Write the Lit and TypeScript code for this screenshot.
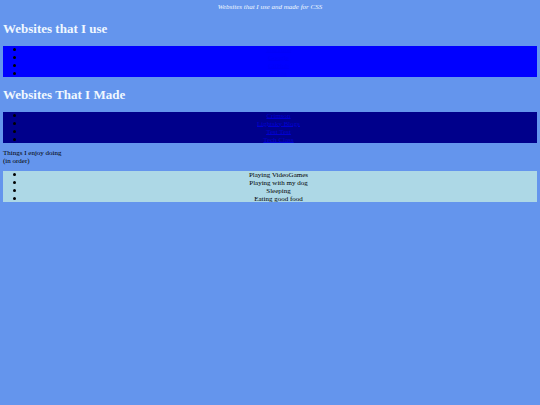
import { LitElement, html, css } from "lit";
import { customElement } from "lit/decorators.js";

const used = ["YouTube", "Google", "GitHub", "Replit"];
const made = ["Crimson", "Lightsky Blogs", "Test Test", "Tech Class"];
const hobbies = ["Playing VideoGames", "Playing with my dog", "Sleeping", "Eating good food"];

@customElement("app-root")
export class AppRoot extends LitElement {
  static styles = css`
    :host {
      display: block;
      box-sizing: border-box;
      min-height: 100vh;
      padding: 3px;
      background: cornflowerblue;
      color: black;
      font: 7px/8px "Liberation Serif", serif;
    }
    .intro {
      margin: 0;
      text-align: center;
      font-style: italic;
      color: aliceblue;
    }
    h1 {
      margin: 10px 0;
      font-size: 13px;
      line-height: 15px;
      color: aliceblue;
    }
    .list {
      display: grid;
      grid-auto-rows: 7px;
      row-gap: 1px;
      margin: 0;
      padding: 0 5px 0 22px;
      overflow: hidden;
      line-height: 7px;
      text-align: center;
    }
    li::marker { font-size: 9px; }
    .used { background: blue; }
    .made { background: darkblue; }
    .hobbies { background: lightblue; }
    a { text-underline-offset: 0; }
    .used a { color: #0000fa; }
    .made a { color: #0000d0; }
    .note { margin: 6px 0; }
  `;

  private links(names: string[], kind: string) {
    return html`<ul class="list ${kind}">
      ${names.map((n) => html`<li><a href="#">${n}</a></li>`)}
    </ul>`;
  }

  render() {
    return html`
      <p class="intro">Websites that I use and made for CSS</p>
      <h1>Websites that I use</h1>
      ${this.links(used, "used")}
      <h1>Websites That I Made</h1>
      ${this.links(made, "made")}
      <p class="note">Things I enjoy doing<br />(in order)</p>
      <ul class="list hobbies">
        ${hobbies.map((h) => html`<li>${h}</li>`)}
      </ul>
    `;
  }
}
